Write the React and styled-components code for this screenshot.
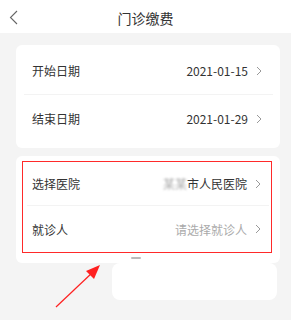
import React from "react";
import styled, { createGlobalStyle } from "styled-components";

const Global = createGlobalStyle`
  html, body { margin: 0; padding: 0; height: 100%; background: #f4f4f4; }
  #root { min-height: 100%; }
  * { box-sizing: border-box; }
`;

const Page = styled.div`
  position: relative;
  width: 291px;
  height: 320px;
  overflow: hidden;
  background: #f4f4f4;
  font-family: "Noto Sans CJK SC", "Noto Sans", sans-serif;
  color: #333;
`;

const Header = styled.div`
  height: 33px;
  background: #fff;
  display: grid;
  grid-template-columns: 40px 1fr 40px;
  align-items: center;
`;

const Back = styled.div`
  display: flex;
  align-items: center;
  padding-left: 9px;
  padding-top: 2px;
  height: 100%;
`;

const Title = styled.div`
  text-align: center;
  font-size: 14px;
  color: #333;
  line-height: 1;
  padding-top: 2px;
`;

const Main = styled.div`
  padding: 12px 11px 0 16px;
  display: flex;
  flex-direction: column;
  gap: 8px;
`;

const Card = styled.div`
  background: #fff;
  border-radius: 6px;
  padding: ${(p) => p.$pad};
`;

const RedFrame = styled.div`
  border: 1px solid #ff2a2a;
`;

const Row = styled.div`
  display: flex;
  align-items: center;
  justify-content: space-between;
  height: ${(p) => p.$h}px;
  padding: ${(p) => p.$pad};
  font-size: 12px;
`;

const Label = styled.span`
  color: #333;
`;

const Value = styled.span`
  display: flex;
  align-items: center;
  gap: 8px;
  color: ${(p) => (p.$placeholder ? "#aaa" : "#333")};
`;

const Blur = styled.span`
  color: #aaa;
  filter: blur(0.8px);
`;

const Divider = styled.div`
  height: 1px;
  background: #f3f3f3;
  margin: ${(p) => p.$m};
`;

const Overlay = styled.div`
  position: absolute;
  pointer-events: none;
`;

const WhitePatch = styled(Overlay)`
  left: 112px;
  top: 263px;
  width: 165px;
  height: 37px;
  background: #fff;
  border-radius: 8px;
  filter: blur(0.6px);
`;

const Smudge = styled(Overlay)`
  left: 131px;
  top: 257px;
  width: 10px;
  height: 2px;
  background: #bbb;
  border-radius: 2px;
  filter: blur(0.6px);
`;

const Chevron = () => (
  <svg width="6" height="10" viewBox="0 0 6 10">
    <path d="M1 1l4 4-4 4" fill="none" stroke="#999" strokeWidth="1" />
  </svg>
);

const BackIcon = () => (
  <svg width="9" height="15" viewBox="0 0 9 15">
    <path d="M8 1L1.5 7.5 8 14" fill="none" stroke="#666" strokeWidth="1.1" />
  </svg>
);

const Arrow = () => (
  <Overlay style={{ left: 0, top: 0 }}>
    <svg width="291" height="320" viewBox="0 0 291 320">
      <line x1="56" y1="307" x2="93" y2="272" stroke="#ff2020" strokeWidth="1.2" />
      <polygon points="100,265 86,271 94,279" fill="#ff2020" />
    </svg>
  </Overlay>
);

export default function App() {
  return (
    <Page>
      <Global />
      <Header>
        <Back>
          <BackIcon />
        </Back>
        <Title>门诊缴费</Title>
        <div />
      </Header>
      <Main>
        <Card $pad="2px 0 6px">
          <Row $h={47} $pad="0 18px 0 16px">
            <Label>开始日期</Label>
            <Value>
              2021-01-15 <Chevron />
            </Value>
          </Row>
          <Divider $m="0 7px 0 8px" />
          <Row $h={47} $pad="0 18px 0 16px">
            <Label>结束日期</Label>
            <Value>
              2021-01-29 <Chevron />
            </Value>
          </Row>
        </Card>
        <Card $pad="5px 8px 10px 6px">
          <RedFrame>
            <Row $h={43} $pad="0 10px 0 9px">
              <Label>选择医院</Label>
              <Value>
                <span>
                  <Blur>某某</Blur>市人民医院
                </span>
                <Chevron />
              </Value>
            </Row>
            <Divider $m="0 2px 0 4px" />
            <Row $h={46} $pad="0 10px 0 9px">
              <Label>就诊人</Label>
              <Value $placeholder>
                请选择就诊人 <Chevron />
              </Value>
            </Row>
          </RedFrame>
        </Card>
      </Main>
      <Smudge />
      <WhitePatch />
      <Arrow />
    </Page>
  );
}
